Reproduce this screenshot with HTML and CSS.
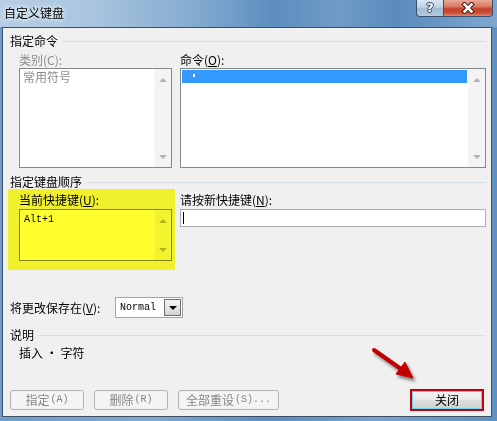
FILE: index.html
```html
<!DOCTYPE html>
<html lang="zh-CN">
<head>
<meta charset="utf-8">
<title>自定义键盘</title>
<link rel="stylesheet" href="styles.css">
</head>
<body>
<div class="window">
  <div class="titlebar">
    <span class="title">自定义键盘</span>
    <div class="caps">
      <div class="cap help">?</div>
      <div class="cap close">
        <svg width="16" height="12" viewBox="0 0 16 12"><path class="xo" d="M4.5 2.5 L11.5 9.5 M11.5 2.5 L4.5 9.5"/><path class="xi" d="M4.5 2.5 L11.5 9.5 M11.5 2.5 L4.5 9.5"/></svg>
      </div>
    </div>
  </div>
  <div class="client">
    <div class="ghead"><span>指定命令</span><i></i></div>
    <div class="cols top">
      <div class="lcol">
        <div class="lbl dis">类别(C):</div>
        <div class="listbox tall">
          <div class="items"><div class="item dis">常用符号</div></div>
          <div class="sb"><i class="up"></i><i class="dn"></i></div>
        </div>
      </div>
      <div class="rcol">
        <div class="lbl">命令(<u>O</u>):</div>
        <div class="listbox tall">
          <div class="items"><div class="item sel"><b class="dot"></b></div></div>
          <div class="sb"><i class="up"></i><i class="dn"></i></div>
        </div>
      </div>
    </div>
    <div class="ghead g2"><span>指定键盘顺序</span><i></i></div>
    <div class="cols mid">
      <div class="lcol">
        <div class="lbl">当前快捷键(<u>U</u>):</div>
        <div class="listbox short">
          <div class="items"><div class="item mono">Alt+1</div></div>
          <div class="sb"><i class="up"></i><i class="dn"></i></div>
        </div>
      </div>
      <div class="rcol">
        <div class="lbl">请按新快捷键(<u>N</u>):</div>
        <div class="input"><i class="caret"></i></div>
      </div>
    </div>
    <div class="saverow">
      <span class="lbl">将更改保存在(<u>V</u>):</span>
      <div class="combo"><span class="mono">Normal</span><div class="drop"><i></i></div></div>
    </div>
    <div class="ghead g3"><span>说明</span><i></i></div>
    <div class="desc">插入 · 字符</div>
    <div class="btnrow">
      <div class="btn dis w74">指定<span class="lat">(A)</span></div>
      <div class="btn dis w74">删除<span class="lat">(R)</span></div>
      <div class="btn dis w101">全部重设<span class="lat">(S)...</span></div>
      <div class="focusring"><div class="btn closebtn">关闭</div></div>
    </div>
    <div class="highlight"></div>
  </div>
  <svg class="arrow" width="497" height="421" viewBox="0 0 497 421">
    <defs>
      <filter id="sh" x="-50%" y="-50%" width="200%" height="200%">
        <feDropShadow dx="2" dy="3" stdDeviation="1.6" flood-color="#000" flood-opacity="0.45"/>
      </filter>
    </defs>
    <g filter="url(#sh)" fill="#c00000" stroke="#c00000">
      <line x1="374" y1="350" x2="401" y2="369" stroke-width="4" stroke-linecap="round"/>
      <polygon points="413,378 396,374 405,362" stroke-width="1" stroke-linejoin="round"/>
    </g>
  </svg>
</div>
</body>
</html>
```
FILE: styles.css
```css
html, body {
  margin: 0;
  padding: 0;
}
body {
  width: 497px;
  height: 421px;
  overflow: hidden;
  font-family: "Noto Sans CJK SC", "Liberation Sans", sans-serif;
  font-size: 12px;
  color: #000;
}
.window {
  position: relative;
  width: 497px;
  height: 421px;
  box-sizing: border-box;
  padding: 0 5px 4px 2px;
  background: linear-gradient(90deg, #6f9cc8 0%, #7fa8cf 30%, #5a8cbd 55%, #77a2cb 75%, #5f90c0 100%);
}
.titlebar {
  display: flex;
  align-items: flex-start;
  height: 27px;
  margin: 0 -5px 0 -2px;
  background: linear-gradient(90deg, #b7cfe6 0%, #a9c5df 18%, #87add2 38%, #5d8ebf 55%, #6f9bc6 68%, #5a8cbe 80%, #7ea7cf 100%);
}
.title {
  padding: 6px 0 0 4px;
  line-height: 14px;
  font-size: 12px;
  color: #000;
  text-shadow: 0 0 4px #fff, 0 0 6px #e8f1fa;
}
.caps {
  display: flex;
  margin-left: auto;
  margin-right: 4px;
}
.cap {
  height: 17px;
  box-sizing: border-box;
  border: 1px solid #3a5170;
  border-top: none;
  display: flex;
  align-items: center;
  justify-content: center;
}
.help {
  width: 27px;
  border-right: none;
  border-bottom-left-radius: 4px;
  background: linear-gradient(180deg, #dbe6f1 0%, #bfd1e3 45%, #a3bbd3 55%, #b7cbdf 100%);
  font-family: "DejaVu Sans", sans-serif;
  font-weight: bold;
  font-size: 13px;
  line-height: 14px;
  color: #fff;
  text-shadow: 0 0 1px #1e3550, 1px 0 0 #34506e, -1px 0 0 #34506e, 0 1px 0 #34506e, 0 -1px 0 #34506e;
}
.close {
  width: 50px;
  border-bottom-right-radius: 4px;
  background: linear-gradient(180deg, #eaa896 0%, #da7a63 40%, #c7412b 55%, #cb4e36 80%, #e08a6f 100%);
}
.close svg path {
  fill: none;
  stroke-linecap: square;
}
.close .xo {
  stroke: #4b1a10;
  stroke-width: 4.5;
}
.close .xi {
  stroke: #fff;
  stroke-width: 2.5;
}
.client {
  position: relative;
  width: 488px;
  height: 388px;
  border: 1px solid #3d4f63;
  background: #f0f0f0;
  box-sizing: content-box;
  padding: 0;
  display: flex;
  flex-direction: column;
}
.client > * {
  margin-left: 7px;
  margin-right: 5px;
}
.ghead {
  display: flex;
  align-items: center;
  gap: 5px;
  height: 14px;
  line-height: 14px;
  margin-top: 6px;
}
.ghead i {
  flex: 1;
  height: 0;
  border-top: 1px solid #d5dfe5;
  margin-top: 1px;
}
.ghead.g2 {
  margin-top: 7px;
}
.ghead.g3 {
  margin-top: 10px;
}
.cols {
  display: flex;
  gap: 8px;
  padding-left: 9px;
}
.cols.top {
  margin-top: 5px;
}
.cols.mid {
  margin-top: 4px;
}
.lcol {
  width: 153px;
  display: flex;
  flex-direction: column;
}
.rcol {
  width: 306px;
  display: flex;
  flex-direction: column;
}
.lbl {
  height: 14px;
  line-height: 14px;
  white-space: nowrap;
}
.top .lbl {
  margin-bottom: 1px;
}
.mid .lbl {
  margin-bottom: 2px;
}
.lbl.dis, .item.dis {
  color: #8c8c8c;
}
u {
  text-decoration: underline;
  text-underline-offset: 1px;
}
.listbox {
  display: flex;
  box-sizing: border-box;
  border: 1px solid #828790;
  background: #fff;
}
.listbox.tall {
  height: 100px;
}
.listbox.short {
  height: 52px;
}
.items {
  flex: 1;
  padding: 1px;
}
.item {
  height: 13px;
  line-height: 13px;
  padding-left: 2px;
  white-space: nowrap;
}
.item.sel {
  background: #3399ff;
  padding-left: 11px;
  display: flex;
  align-items: flex-start;
}
.dot {
  display: block;
  width: 2px;
  height: 3px;
  margin-top: 4px;
  background: #fff;
}
.mono {
  font-family: "Liberation Mono", "DejaVu Sans Mono", monospace;
  font-size: 10px;
}
.item.mono {
  padding-left: 3px;
  margin-top: 2px;
}
.sb {
  width: 17px;
  background: #f4f4f4;
  border-left: 1px solid #f8f8f8;
  display: flex;
  flex-direction: column;
  justify-content: space-between;
  align-items: center;
  padding: 9px 0 8px;
  box-sizing: border-box;
}
.sb i {
  width: 0;
  height: 0;
  border-left: 4px solid transparent;
  border-right: 4px solid transparent;
}
.sb .up {
  border-bottom: 4px solid #b4b4b4;
}
.sb .dn {
  border-top: 4px solid #b4b4b4;
}
.input {
  height: 18px;
  box-sizing: border-box;
  border: 1px solid #abadb3;
  background: #fff;
  padding: 2px 0 0 2px;
}
.caret {
  display: block;
  width: 1px;
  height: 12px;
  background: #000;
}
.saverow {
  display: grid;
  grid-template-columns: 105px 68px;
  align-items: center;
  margin-top: 36px;
}
.combo {
  display: flex;
  align-items: center;
  height: 21px;
  box-sizing: border-box;
  border: 1px solid #a3a3a3;
  background: #fff;
  padding: 1px;
}
.combo .mono {
  flex: 1;
  padding-left: 3px;
  font-size: 10px;
  line-height: 12px;
}
.drop {
  width: 17px;
  height: 17px;
  box-sizing: border-box;
  border: 1px solid #707070;
  background: linear-gradient(180deg, #f3f3f3 0%, #e6e6e6 50%, #d2d2d2 100%);
  display: flex;
  align-items: center;
  justify-content: center;
}
.drop i {
  width: 0;
  height: 0;
  border-left: 4px solid transparent;
  border-right: 4px solid transparent;
  border-top: 4px solid #000;
}
.desc {
  margin-top: 4px;
  padding-left: 9px;
  height: 14px;
  line-height: 14px;
}
.btnrow {
  margin-top: auto;
  margin-bottom: 5px;
  display: flex;
  align-items: center;
  gap: 10px;
  height: 22px;
}
.btn {
  height: 20px;
  box-sizing: border-box;
  border: 1px solid #adb2b5;
  border-radius: 3px;
  background: #f4f4f4;
  display: flex;
  align-items: center;
  justify-content: center;
  line-height: 14px;
  white-space: nowrap;
}
.btn.dis {
  color: #868686;
}
.lat {
  font-family: "Liberation Mono", monospace;
  font-size: 10px;
  margin-left: 1px;
}
.w74 {
  width: 74px;
}
.w101 {
  width: 101px;
}
.focusring {
  margin-left: auto;
  margin-right: 2px;
  width: 74px;
  height: 22px;
  box-sizing: border-box;
  border: 2px solid #c4000e;
}
.btn.closebtn {
  width: 70px;
  height: 18px;
  border: 1px solid #6ed4ee;
  border-radius: 0;
  background: linear-gradient(180deg, #f3f3f3 0%, #ebebeb 45%, #dcdcdc 55%, #d0d0d0 100%);
  color: #000;
}
.highlight {
  position: absolute;
  left: 5px;
  top: 161px;
  width: 167px;
  height: 81px;
  margin: 0;
  background: #ffff30;
  mix-blend-mode: multiply;
  pointer-events: none;
}
.arrow {
  position: absolute;
  left: 0;
  top: 0;
  pointer-events: none;
}
```
